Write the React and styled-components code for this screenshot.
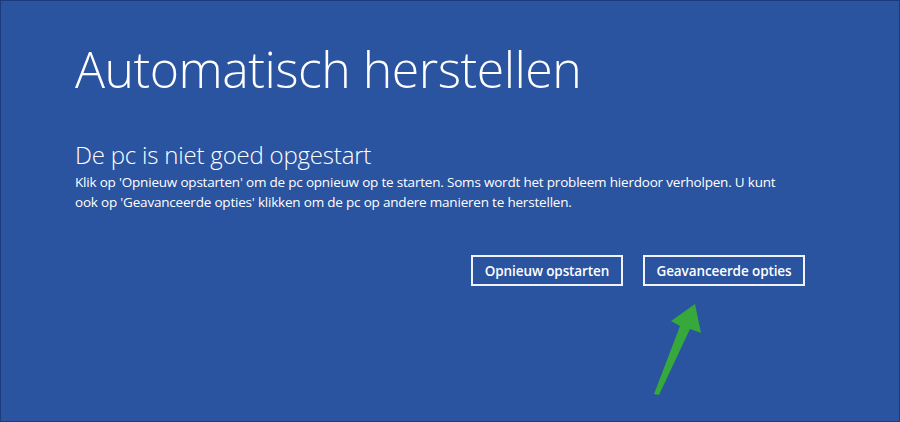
import React from 'react';
import styled, { createGlobalStyle } from 'styled-components';

const GlobalStyle = createGlobalStyle`
  html, body {
    margin: 0;
    padding: 0;
    background: #2a53a0;
  }
`;

const Screen = styled.div`
  position: relative;
  width: 900px;
  height: 422px;
  box-sizing: border-box;
  border: 1px solid #1d3b7a;
  background: #2a53a0;
  color: #ffffff;
  font-family: "Open Sans", "Noto Sans", sans-serif;
  padding: 35px 0 0 74px;
  display: flex;
  flex-direction: column;
  overflow: hidden;
`;

const Title = styled.h1`
  margin: 0;
  font-weight: 300;
  font-size: 50px;
  line-height: 66px;
  letter-spacing: -0.5px;
`;

const Subtitle = styled.h2`
  margin: 38px 0 0 0;
  font-weight: 300;
  font-size: 24px;
  line-height: 30px;
  letter-spacing: -0.2px;
`;

const Message = styled.p`
  margin: 2px 0 0 0;
  width: 712px;
  font-size: 13.5px;
  line-height: 20px;
  letter-spacing: -0.2px;
`;

const Actions = styled.div`
  display: flex;
  gap: 20px;
  margin: 43px 0 0 396px;
`;

const ActionButton = styled.button`
  width: ${props => props.width}px;
  height: 31px;
  box-sizing: border-box;
  border: 2px solid #eef3ff;
  background: transparent;
  color: #ffffff;
  font-family: "Open Sans", "Noto Sans", sans-serif;
  font-weight: 600;
  font-size: 13.5px;
  letter-spacing: -0.1px;
  padding: 0;
  cursor: pointer;
`;

const Arrow = styled.svg`
  position: absolute;
  left: 0;
  top: 0;
  pointer-events: none;
`;

export default function App() {
  return (
    <>
      <GlobalStyle />
      <Screen>
        <Title>Automatisch herstellen</Title>
        <Subtitle>De pc is niet goed opgestart</Subtitle>
        <Message>
          Klik op 'Opnieuw opstarten' om de pc opnieuw op te starten. Soms wordt het probleem hierdoor verholpen. U kunt
          ook op 'Geavanceerde opties' klikken om de pc op andere manieren te herstellen.
        </Message>
        <Actions>
          <ActionButton width={152}>Opnieuw opstarten</ActionButton>
          <ActionButton width={162}>Geavanceerde opties</ActionButton>
        </Actions>
        <Arrow width="900" height="422" viewBox="0 0 900 422">
          <polygon
            points="694,303 700,332 689,328 658,394 653,393 679,325 670,320"
            fill="#36a83c"
          />
        </Arrow>
      </Screen>
    </>
  );
}
